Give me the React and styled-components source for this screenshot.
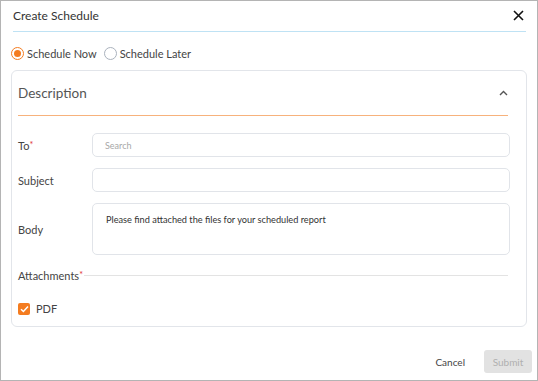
import styled, { createGlobalStyle } from "styled-components";

const GlobalStyle = createGlobalStyle`
  html, body {
    margin: 0;
    padding: 0;
    background: #ffffff;
  }
  * {
    box-sizing: border-box;
  }
`;

const Window = styled.div`
  width: 538px;
  height: 381px;
  border: 1px solid #b4b4b4;
  background: #fff;
  font-family: Lato, "Noto Sans", sans-serif;
  color: #333;
  display: flex;
  flex-direction: column;
`;

const Header = styled.div`
  height: 31px;
  margin: 0 11px 0 12px;
  border-bottom: 1px solid #bfe2f4;
  display: flex;
  align-items: center;
  justify-content: space-between;
  padding-bottom: 1px;
`;

const Title = styled.div`
  font-size: 12px;
  color: #333;
`;

const CloseButton = styled.button`
  border: 0;
  background: none;
  padding: 0;
  margin-right: 2px;
  width: 11px;
  height: 11px;
  display: flex;
  cursor: pointer;
`;

const RadioRow = styled.div`
  display: flex;
  align-items: center;
  gap: 7px;
  margin: 14px 0 0 10px;
  height: 14px;
`;

const RadioOption = styled.label`
  display: flex;
  align-items: center;
  gap: 3px;
  font-size: 11px;
  color: #444;
`;

const RadioCircle = styled.span`
  width: 13px;
  height: 13px;
  border-radius: 50%;
  border: 1.5px solid ${({ $checked }) => ($checked ? "#f47c20" : "#aab2bd")};
  display: flex;
  align-items: center;
  justify-content: center;

  &::after {
    content: "";
    width: 7px;
    height: 7px;
    border-radius: 50%;
    background: ${({ $checked }) => ($checked ? "#f47c20" : "transparent")};
  }
`;

const Card = styled.div`
  margin: 10px 10px 0 10px;
  border: 1px solid #e2e5ea;
  border-radius: 6px;
  padding: 0 16px 11px 6px;
`;

const CardHeader = styled.div`
  height: 45px;
  margin-right: 2px;
  border-bottom: 1px solid #f7b27c;
  display: flex;
  align-items: center;
  justify-content: space-between;
`;

const CardTitle = styled.div`
  font-size: 13.5px;
  color: #555;
`;

const FormRow = styled.div`
  display: grid;
  grid-template-columns: 74px 1fr;
  align-items: center;
  margin-top: ${({ $gap }) => $gap}px;
`;

const Label = styled.div`
  font-size: 11px;
  color: #444;
`;

const Required = styled.span`
  color: #e03131;
  font-size: 9px;
  vertical-align: top;
`;

const Input = styled.input`
  height: 24px;
  border: 1px solid #e1e4e9;
  border-radius: 5px;
  padding: 0 12px;
  font-family: Lato, "Noto Sans", sans-serif;
  font-size: 9px;
  outline: none;

  &::placeholder {
    color: #a8a8a8;
  }
`;

const TextArea = styled.textarea`
  height: 52px;
  border: 1px solid #e1e4e9;
  border-radius: 5px;
  padding: 10px 13px;
  font-family: Lato, "Noto Sans", sans-serif;
  font-size: 9.2px;
  color: #333;
  resize: none;
  outline: none;
`;

const SectionRow = styled.div`
  display: flex;
  align-items: center;
  margin-top: 13px;
  margin-right: 2px;
  height: 14px;
`;

const SectionLine = styled.div`
  flex: 1;
  height: 1px;
  background: #e3e3e3;
  margin-left: 1px;
  margin-top: 1px;
`;

const CheckRow = styled.label`
  display: flex;
  align-items: center;
  gap: 6px;
  margin-top: 20px;
  font-size: 11px;
  color: #444;
`;

const CheckBox = styled.span`
  width: 12px;
  height: 12px;
  border-radius: 2px;
  background: #f47c20;
  display: flex;
  align-items: center;
  justify-content: center;
`;

const Footer = styled.div`
  margin-top: auto;
  display: flex;
  justify-content: flex-end;
  align-items: center;
  gap: 19px;
  padding: 0 5px 7px 0;
`;

const TextButton = styled.button`
  border: 0;
  background: none;
  font-family: Lato, "Noto Sans", sans-serif;
  font-size: 10px;
  color: #444;
  padding: 0;
`;

const SubmitButton = styled.button`
  width: 48px;
  height: 23px;
  border: 0;
  border-radius: 3px;
  background: #e2e2e2;
  color: #b0b0b0;
  font-family: Lato, "Noto Sans", sans-serif;
  font-size: 10px;
`;

export default function App() {
  return (
    <>
      <GlobalStyle />
      <Window>
        <Header>
          <Title>Create Schedule</Title>
          <CloseButton aria-label="Close">
            <svg width="11" height="11" viewBox="0 0 11 11">
              <path d="M1 1L10 10M10 1L1 10" stroke="#111" strokeWidth="1.6" />
            </svg>
          </CloseButton>
        </Header>

        <RadioRow>
          <RadioOption>
            <RadioCircle $checked />
            Schedule Now
          </RadioOption>
          <RadioOption>
            <RadioCircle />
            Schedule Later
          </RadioOption>
        </RadioRow>

        <Card>
          <CardHeader>
            <CardTitle>Description</CardTitle>
            <svg width="9" height="6" viewBox="0 0 9 6">
              <path d="M1 5L4.5 1.5L8 5" fill="none" stroke="#555" strokeWidth="1.4" />
            </svg>
          </CardHeader>

          <FormRow $gap={17}>
            <Label>
              To<Required>*</Required>
            </Label>
            <Input placeholder="Search" />
          </FormRow>
          <FormRow $gap={11}>
            <Label>Subject</Label>
            <Input />
          </FormRow>
          <FormRow $gap={11}>
            <Label>Body</Label>
            <TextArea defaultValue="Please find attached the files for your scheduled report" />
          </FormRow>

          <SectionRow>
            <Label>
              Attachments<Required>*</Required>
            </Label>
            <SectionLine />
          </SectionRow>

          <CheckRow>
            <CheckBox>
              <svg width="9" height="8" viewBox="0 0 9 8">
                <path d="M1 4.2L3.4 6.5L8 1.5" fill="none" stroke="#fff" strokeWidth="1.5" />
              </svg>
            </CheckBox>
            PDF
          </CheckRow>
        </Card>

        <Footer>
          <TextButton>Cancel</TextButton>
          <SubmitButton disabled>Submit</SubmitButton>
        </Footer>
      </Window>
    </>
  );
}
